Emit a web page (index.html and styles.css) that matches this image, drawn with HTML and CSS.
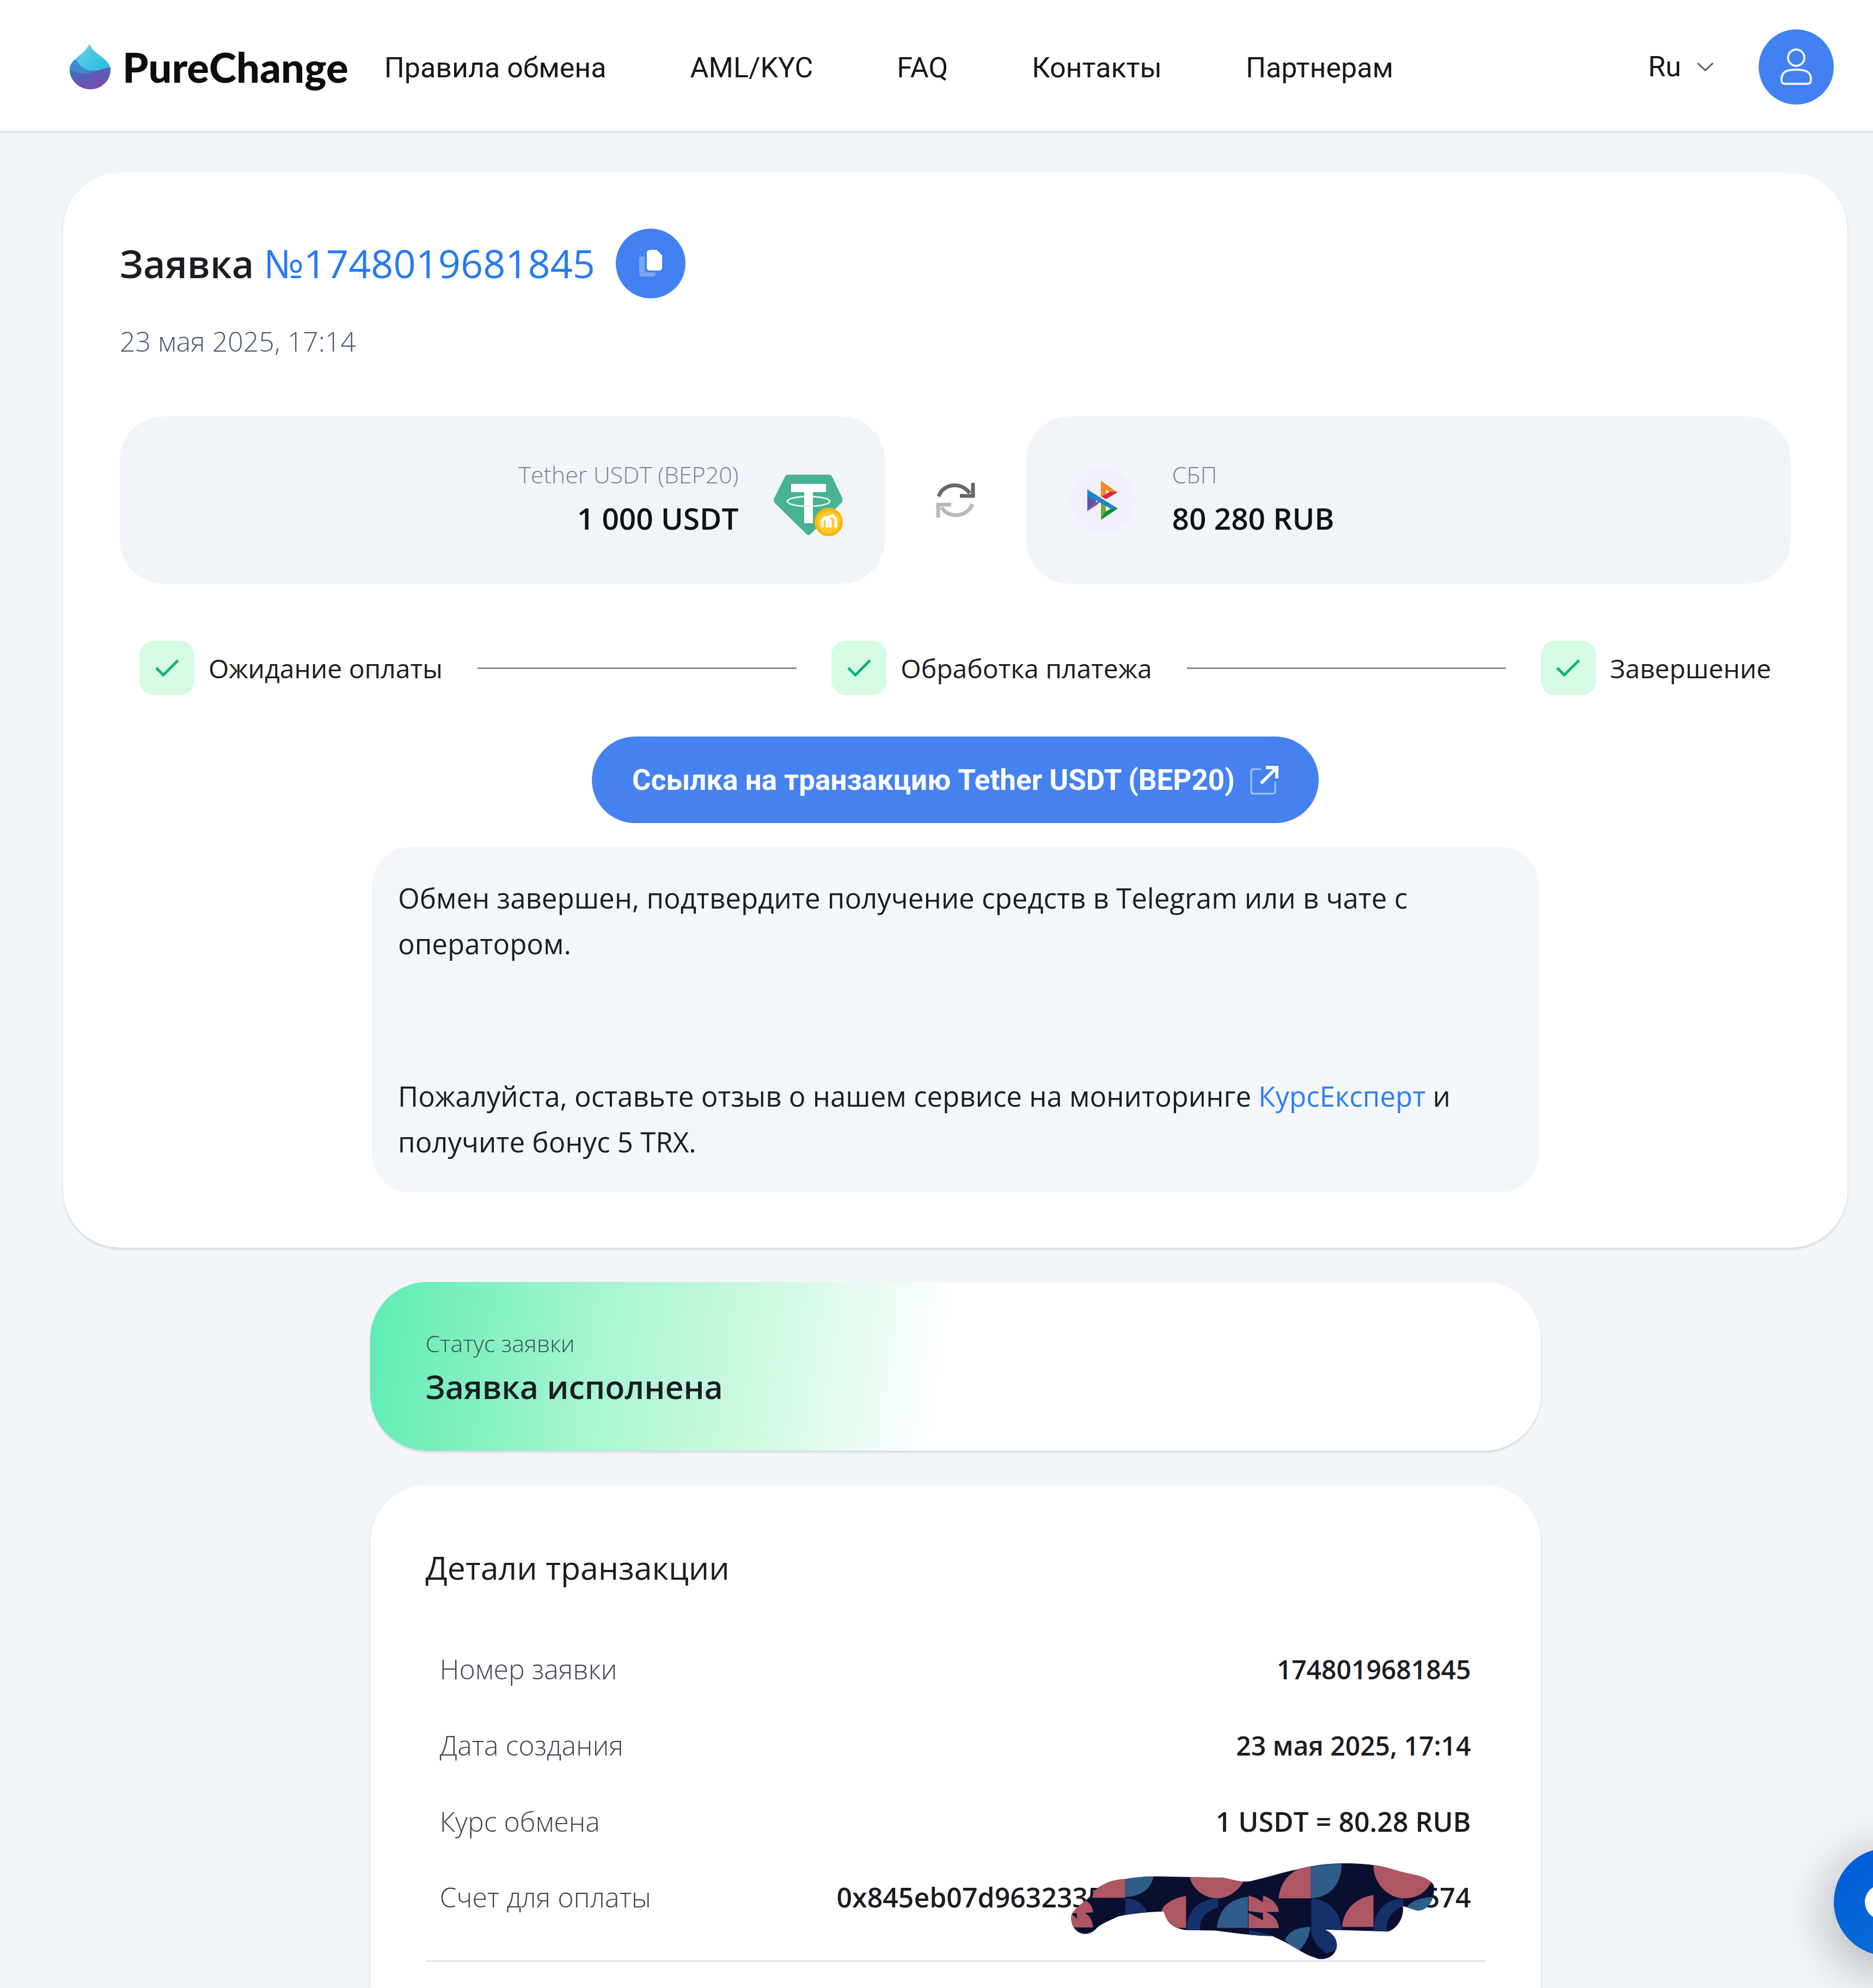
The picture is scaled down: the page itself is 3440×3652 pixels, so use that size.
FILE: index.html
```html
<!DOCTYPE html>
<html lang="ru">
<head>
    <meta charset="UTF-8">
    <meta name="viewport" content="width=device-width, initial-scale=1.0">
    <title>PureChange</title>
    <link rel="stylesheet" href="styles.css">
</head>
<body>
    <header class="header">
        <a class="logo" href="#">
            <svg class="logo-drop" viewBox="0 0 75 83" aria-hidden="true">
                <defs>
                    <linearGradient id="dropTop" x1="0" y1="0" x2="1" y2="1">
                        <stop offset="0" stop-color="#6bd3e8"/>
                        <stop offset="1" stop-color="#12b4dc"/>
                    </linearGradient>
                    <linearGradient id="dropBottom" x1="0" y1="0" x2="0.4" y2="1">
                        <stop offset="0" stop-color="#3a8fd0"/>
                        <stop offset="0.5" stop-color="#4a66b8"/>
                        <stop offset="1" stop-color="#7a4bae"/>
                    </linearGradient>
                    <clipPath id="drop"><path d="M36 0C42 12 53 19 63 27C71 34 75 40 75 47C75 67 58 83 38 83S0 67 0 47C0 37 6 31 14 24C23 17 31 10 36 0Z"/></clipPath>
                </defs>
                <g clip-path="url(#drop)">
                    <rect width="75" height="83" fill="url(#dropTop)"/>
                    <path d="M0 28C14 24 15 38 25 44C40 54 56 47 75 42V83H0Z" fill="url(#dropBottom)"/>
                    <path d="M0 28C14 24 15 38 25 44C34 50 40 50 44 50C30 58 15 54 0 46Z" fill="#3d9ad6" opacity="0.6"/>
                </g>
            </svg>
            <span>PureChange</span>
        </a>
        <nav class="nav">
            <a href="#">Правила обмена</a>
            <a href="#">AML/KYC</a>
            <a href="#">FAQ</a>
            <a href="#">Контакты</a>
            <a href="#">Партнерам</a>
        </nav>
        <div class="header-right">
            <div class="lang">
                <select class="lang-select" aria-label="Язык">
                    <option>Ru</option>
                    <option>En</option>
                </select>
                <svg class="lang-arrow" viewBox="0 0 32 18" fill="none" stroke="#555b66" stroke-width="3" aria-hidden="true"><path d="M2 2L16 15L30 2"/></svg>
            </div>
            <button class="user-btn" type="button" aria-label="Профиль">
                <svg viewBox="0 0 60 70" fill="none" stroke="#e9f0ff" stroke-width="4" aria-hidden="true">
                    <circle cx="30" cy="18" r="15"/>
                    <path d="M3 58C3 44 12 40 30 40S57 44 57 58C57 64 55 66 50 66H10C5 66 3 64 3 58Z"/>
                </svg>
            </button>
        </div>
    </header>

    <main class="page">
        <section class="card order">
            <div class="order-head">
                <h1 class="order-title">Заявка <span>№1748019681845</span></h1>
                <button class="copy-btn" type="button" aria-label="Скопировать">
                    <svg viewBox="0 0 46 54" aria-hidden="true">
                        <path d="M12 14H6Q2 14 2 18V46Q2 51 7 51H27Q32 51 32 46V43H18Q12 43 12 37Z" fill="#7aa5f8"/>
                        <path d="M16 8Q16 2 22 2H34L44 12V34Q44 40 38 40H22Q16 40 16 34Z" fill="#fff"/>
                    </svg>
                </button>
            </div>
            <time class="order-date">23 мая 2025, 17:14</time>

            <div class="exchange">
                <div class="coin coin-from">
                    <div class="coin-text">
                        <span class="coin-name">Tether USDT (BEP20)</span>
                        <strong class="coin-sum">1 000 USDT</strong>
                    </div>
                    <svg class="coin-icon" viewBox="0 -16 128 128" overflow="visible" aria-hidden="true">
                        <path d="M26 1H102Q105 1 107 4L126 44Q128 49 124 53L68 110Q64 114 60 110L2 53Q-1 49 1 44L21 4Q23 1 26 1Z" fill="#47b394"/>
                        <path d="M32 18H96V33H72V90H56V33H32Z" fill="#fff"/>
                        <ellipse cx="64" cy="50" rx="39" ry="9" fill="none" stroke="#e3f5ee" stroke-width="3"/>
                        <path d="M56 34H72V56H56Z" fill="#fff"/>
                        <circle cx="101" cy="88" r="26" fill="#fbb804"/>
                        <circle cx="101" cy="88" r="21" fill="#ffc933"/>
                        <path d="M89 98V85L94 80L98 84V98M104 98V86L99 80L108 76L114 82V98" fill="none" stroke="#fff" stroke-width="5"/>
                    </svg>
                </div>
                <svg class="swap" viewBox="0 0 72 66" aria-hidden="true">
                    <g fill="none" stroke-width="7">
                        <path d="M5 26C12 3 46 -3 62 20" stroke="#686868"/>
                        <path d="M68 1V25H44" stroke="#686868"/>
                        <path d="M67 40C58 63 25 69 10 46" stroke="#b9b9b9"/>
                        <path d="M4 65V41H28" stroke="#b9b9b9"/>
                    </g>
                </svg>
                <div class="coin coin-to">
                    <svg class="coin-icon" viewBox="0 0 128 128" aria-hidden="true">
                        <circle cx="64" cy="64" r="60" fill="#f2effb"/>
                        <path d="M36 44L52 58L52 68L36 84Z" fill="#5b57a8"/>
                        <path d="M36 84L52 68L60 64L66 60L54 72Z" fill="#9a3fa0"/>
                        <path d="M61 28L92 50L79 50L70 44V52L61 58Z" fill="#f78b1f"/>
                        <path d="M92 49L70 62L62 57L78 48Z" fill="#e5213f"/>
                        <path d="M61 68L70 73V86L92 79L61 100Z" fill="#67b22e"/>
                        <path d="M92 79L61 100L68 86L80 79Z" fill="#14893c"/>
                        <path d="M36 44L92 79H78L36 55Z" fill="#1b86c8"/>
                    </svg>
                    <div class="coin-text">
                        <span class="coin-name">СБП</span>
                        <strong class="coin-sum">80 280 RUB</strong>
                    </div>
                </div>
            </div>

            <ol class="steps">
                <li class="step">
                    <span class="step-icon"><svg viewBox="0 0 44 32" fill="none" stroke="#10b377" stroke-width="5" aria-hidden="true"><path d="M2 16L15 29L42 2"/></svg></span>
                    Ожидание оплаты
                </li>
                <li class="step-line" aria-hidden="true"></li>
                <li class="step">
                    <span class="step-icon"><svg viewBox="0 0 44 32" fill="none" stroke="#10b377" stroke-width="5" aria-hidden="true"><path d="M2 16L15 29L42 2"/></svg></span>
                    Обработка платежа
                </li>
                <li class="step-line" aria-hidden="true"></li>
                <li class="step">
                    <span class="step-icon"><svg viewBox="0 0 44 32" fill="none" stroke="#10b377" stroke-width="5" aria-hidden="true"><path d="M2 16L15 29L42 2"/></svg></span>
                    Завершение
                </li>
            </ol>

            <a class="tx-link" href="#">
                <span>Ссылка на транзакцию Tether USDT (BEP20)</span>
                <svg viewBox="0 0 52 54" fill="none" aria-hidden="true">
                    <path d="M20 7H6Q2 7 2 11V48Q2 52 6 52H42Q46 52 46 48V30" stroke="#a5c3ff" stroke-width="3"/>
                    <path d="M20 33L47 6" stroke="#fff" stroke-width="6"/>
                    <path d="M29 4H49V24" stroke="#fff" stroke-width="6"/>
                </svg>
            </a>

            <div class="message">
                <p>Обмен завершен, подтвердите получение средств в Telegram или в чате с оператором.</p>
                <p>Пожалуйста, оставьте отзыв о нашем сервисе на мониторинге <a href="#">КурсЕксперт</a> и получите бонус 5 TRX.</p>
            </div>
        </section>

        <section class="card status">
            <span class="status-label">Статус заявки</span>
            <strong class="status-value">Заявка исполнена</strong>
        </section>

        <section class="card details">
            <h2 class="details-title">Детали транзакции</h2>
            <table class="details-table">
                <tr><th scope="row">Номер заявки</th><td class="num">1748019681845</td></tr>
                <tr><th scope="row">Дата создания</th><td class="num">23 мая 2025, 17:14</td></tr>
                <tr><th scope="row">Курс обмена</th><td>1 USDT = 80.28 RUB</td></tr>
                <tr>
                    <th scope="row">Счет для оплаты</th>
                    <td>
                        <div class="account">
                            <span>0x845eb07d9632335</span>
                            <span>574</span>
                            <svg class="account-cover" viewBox="55 130 1415 535" preserveAspectRatio="none" aria-hidden="true">
                                <defs>
                                    <clipPath id="cover"><path d="M58 440C55 400 90 370 130 320C150 270 200 225 270 222C340 205 380 208 400 208L650 215C690 225 720 245 760 232C830 210 880 185 930 172C1000 145 1060 135 1130 136C1220 138 1260 150 1300 165C1370 200 1440 195 1468 255C1475 300 1460 390 1410 395C1380 390 1370 375 1348 372C1355 440 1320 500 1290 510L1045 500C1090 530 1100 580 1085 620C1070 660 1030 670 1010 655C950 630 930 590 840 535C770 535 700 520 620 505L500 502C450 490 430 460 418 400C350 405 300 410 240 428C200 455 170 470 155 495C140 520 120 525 105 523C80 515 60 490 58 440Z"/></clipPath>
                                </defs>
                                <g clip-path="url(#cover)">
                                    <rect x="50" y="125" width="1430" height="545" fill="#0a0f30"/>
                                    <g fill="#ae5763">
                                        <path d="M140 325C145 260 180 200 268 200V325Z"/>
                                        <path d="M50 325H82Q140 340 143 405L110 408Q140 430 143 488H60L50 400L80 440V410H50Z"/>
                                        <path d="M518 200C525 280 580 328 625 328S710 285 730 230L700 190Z"/>
                                        <path d="M505 315C450 325 410 370 410 400V490H505Z"/>
                                        <path d="M865 328C870 240 910 165 990 150V328Z"/>
                                        <path d="M748 312Q790 330 804 352V312Q860 340 866 403H815Q862 430 866 492H748V408L804 448V408L748 398Z"/>
                                        <path d="M1112 485C1115 400 1160 325 1234 310V485Z"/>
                                        <path d="M1234 140C1230 240 1290 328 1350 328S1440 290 1460 235L1400 140Z"/>
                                    </g>
                                    <g fill="#2f5d8a">
                                        <path d="M268 200H378C375 270 330 320 268 320Z"/>
                                        <path d="M990 140H1110C1110 250 1065 325 990 328Z"/>
                                        <path d="M625 490C630 400 670 330 746 320V490Z"/>
                                        <path d="M890 560C900 510 940 485 988 485C985 540 965 590 940 620Z"/>
                                        <path d="M1360 380Q1390 325 1470 320V400H1370Z"/>
                                    </g>
                                    <g fill="#15316b">
                                        <path d="M268 328C310 330 345 360 358 420H268Z"/>
                                        <path d="M508 505V470C520 380 560 335 630 328V378C580 400 555 440 560 505Z"/>
                                        <path d="M992 330C1060 335 1110 400 1110 520H992Z"/>
                                        <path d="M992 490H1050L1100 560V610L1050 630C1010 590 992 545 992 490Z"/>
                                        <path d="M1236 515V470C1245 380 1290 335 1350 330V370C1300 400 1282 450 1285 515Z"/>
                                        <path d="M750 500C780 515 830 520 850 540H750Z"/>
                                    </g>
                                </g>
                            </svg>
                        </div>
                    </td>
                </tr>
            </table>
        </section>
    </main>

    <button class="chat-btn" type="button" aria-label="Чат">
        <svg viewBox="0 0 84 64" aria-hidden="true"><rect width="84" height="64" rx="32" fill="#fff"/></svg>
    </button>
</body>
</html>
```

FILE: styles.css
```css
* {
    box-sizing: border-box;
}

body {
    display: flex;
    flex-direction: column;
    min-height: 100vh;
    margin: 0;
    background-color: #f3f6f9;
    color: #1b1d22;
    font-family: "Open Sans", "Noto Sans", sans-serif;
    font-size: 50px;
}

a {
    color: inherit;
    text-decoration: none;
}

button {
    padding: 0;
    border: 0;
    cursor: pointer;
}

svg {
    display: block;
    flex-shrink: 0;
}

/* Header */
.header {
    display: flex;
    align-items: center;
    height: 244px;
    padding: 4px 72px 0 128px;
    background-color: #fff;
    border-bottom: 3px solid #dcdfe8;
    font-family: Roboto, sans-serif;
    font-size: 52px;
    color: #17181b;
}

.logo {
    display: flex;
    align-items: center;
    gap: 22px;
    margin-right: 66px;
    font-family: Lato, sans-serif;
    font-size: 76px;
    font-weight: 900;
    color: #0d0d0d;
}

.logo-drop {
    width: 75px;
    height: 83px;
}

.nav {
    display: flex;
    gap: 154px;
    padding-top: 4px;
}

.header-right {
    display: flex;
    align-items: center;
    gap: 82px;
    margin-left: auto;
}

.lang {
    display: flex;
    align-items: center;
    gap: 28px;
}

.lang-select {
    appearance: none;
    padding: 0;
    border: 0;
    background: none;
    color: inherit;
    font: inherit;
    cursor: pointer;
}

.lang-arrow {
    width: 32px;
    height: 18px;
}

.user-btn,
.copy-btn {
    display: flex;
    align-items: center;
    justify-content: center;
    border-radius: 50%;
    background-color: #4281f2;
}

.user-btn {
    width: 138px;
    height: 138px;
}

.user-btn svg {
    width: 60px;
    height: 70px;
}

/* Cards */
.page {
    display: flex;
    flex: 1;
    flex-direction: column;
    gap: 63px;
    padding: 73px 47px 0 116px;
}

.card {
    background-color: #fff;
    border-radius: 105px;
    box-shadow: 0 3px 4px rgba(40, 50, 90, 0.16);
}

.order {
    padding: 102px 104px;
}

.order-head {
    display: flex;
    align-items: center;
    gap: 38px;
}

.order-title {
    margin: 0;
    font-size: 70px;
    font-weight: 600;
    line-height: 128px;
}

.order-title span {
    color: #2579f5;
    font-size: 72px;
    font-weight: 400;
}

.copy-btn {
    width: 128px;
    height: 128px;
}

.copy-btn svg {
    width: 46px;
    height: 54px;
}

.order-date {
    display: block;
    margin-top: 44px;
    color: #4d5b70;
    font-weight: 300;
    line-height: 70px;
}

.exchange {
    display: grid;
    grid-template-columns: 1fr 72px 1fr;
    align-items: center;
    gap: 94px;
    margin-top: 103px;
}

.coin {
    display: flex;
    align-items: center;
    gap: 64px;
    height: 307px;
    padding: 0 76px;
    border-radius: 80px;
    background-color: #f1f4f8;
}

.coin-from {
    justify-content: flex-end;
    text-align: right;
}

.coin-text {
    display: flex;
    flex-direction: column;
    padding-bottom: 10px;
}

.coin-name {
    color: #7c8495;
    font-size: 43px;
    font-weight: 300;
    line-height: 76px;
}

.coin-sum {
    color: #101114;
    font-size: 55px;
    font-weight: 600;
    line-height: 84px;
}

.coin-icon {
    width: 128px;
}

.swap {
    width: 72px;
}

.steps {
    display: flex;
    align-items: center;
    justify-content: space-between;
    gap: 64px;
    margin: 105px 0 0;
    padding: 0 36px;
    font-size: 48px;
    list-style: none;
}

.step {
    display: flex;
    align-items: center;
    gap: 26px;
    white-space: nowrap;
}

.step-icon {
    display: flex;
    align-items: center;
    justify-content: center;
    width: 101px;
    height: 100px;
    border-radius: 26px;
    background-color: #d6fbe5;
}

.step-icon svg {
    width: 44px;
    height: 32px;
}

.step-line {
    flex: 1;
    height: 3px;
    background-color: #8190a8;
}

.tx-link {
    display: flex;
    align-items: center;
    gap: 28px;
    width: fit-content;
    height: 159px;
    margin: 76px auto 44px;
    padding: 0 74px;
    border-radius: 80px;
    background-color: #4582f0;
    color: #fff;
    font-family: Roboto, sans-serif;
    font-size: 53px;
    font-weight: 700;
}

.tx-link svg {
    width: 52px;
    height: 54px;
}

.message {
    max-width: 2143px;
    margin: 0 auto;
    padding: 51px 48px;
    border-radius: 70px;
    background-color: #f4f7fa;
    font-size: 51px;
    line-height: 84px;
}

.message p {
    margin: 0;
}

.message p + p {
    margin-top: 196px;
}

.message a {
    color: #2f7df6;
}

.status,
.details {
    width: 100%;
    max-width: 2150px;
    margin: 0 auto;
    padding: 0 102px;
}

.status {
    display: flex;
    flex-direction: column;
    justify-content: center;
    height: 310px;
    background: linear-gradient(98deg, #5decb3 0%, #a8f5d2 20%, #d5f9e6 36%, #fff 49%);
}

.status-label {
    color: #3a5a52;
    font-size: 43px;
    font-weight: 300;
    line-height: 74px;
}

.status-value {
    font-size: 59px;
    font-weight: 600;
    line-height: 84px;
}

.details {
    flex: 1;
    padding-top: 102px;
    border-radius: 105px 105px 0 0;
}

.details-title {
    margin: 0 0 70px;
    font-size: 59px;
    font-weight: 400;
    line-height: 98px;
}

.details-table {
    width: 100%;
    border-collapse: collapse;
    border-bottom: 3px solid #dfe3ec;
}

.details-table th,
.details-table td {
    height: 140px;
    padding: 0 26px 4px;
}

.details-table tr:last-child th,
.details-table tr:last-child td {
    height: 184px;
    padding-bottom: 48px;
}

.details-table th {
    color: #3f4550;
    font-weight: 300;
    text-align: left;
}

.details-table td {
    font-weight: 600;
    text-align: right;
}

.details-table .num {
    font-size: 48px;
}

.account {
    display: flex;
    position: relative;
    justify-content: space-between;
    width: 1165px;
    margin-left: auto;
}

/* Painted strip that hides the middle of the address */
.account-cover {
    position: absolute;
    top: -30px;
    right: 68px;
    width: 668px;
    height: 179px;
}

.chat-btn {
    display: flex;
    position: fixed;
    right: -126px;
    bottom: 59px;
    align-items: center;
    justify-content: center;
    width: 198px;
    height: 198px;
    border-radius: 50%;
    background: linear-gradient(135deg, #0058dd, #0a76cc);
    box-shadow: 0 20px 110px rgba(0, 0, 0, 0.35);
}

.chat-btn svg {
    width: 84px;
    height: 64px;
}
```
